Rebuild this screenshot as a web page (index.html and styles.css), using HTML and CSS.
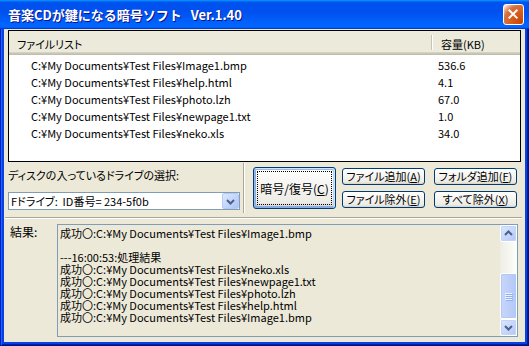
FILE: index.html
```html
<!DOCTYPE html>
<html lang="ja">
<head>
    <meta charset="UTF-8">
    <title>音楽CDが鍵になる暗号ソフト Ver.1.40</title>
    <link rel="stylesheet" href="styles.css">
</head>
<body>
    <div class="window">
        <div class="titlebar">
            <span class="title">音楽CDが鍵になる暗号ソフト&nbsp;&nbsp;&nbsp;Ver.1.40</span>
            <button class="close" aria-label="閉じる">
                <svg width="21" height="21" viewBox="0 0 21 21"><path d="M6 6 L14 14 M14 6 L6 14" stroke="#fff" stroke-width="2.2" stroke-linecap="square"/></svg>
            </button>
        </div>

        <div class="client">
            <div class="filelist">
                <div class="list-header">
                    <div class="col-path">ファイルリスト</div>
                    <div class="col-size">容量(KB)</div>
                </div>
                <ul class="rows">
                    <li><span class="col-path">C:¥My Documents¥Test Files¥Image1.bmp</span><span class="col-size">536.6</span></li>
                    <li><span class="col-path">C:¥My Documents¥Test Files¥help.html</span><span class="col-size">4.1</span></li>
                    <li><span class="col-path">C:¥My Documents¥Test Files¥photo.lzh</span><span class="col-size">67.0</span></li>
                    <li><span class="col-path">C:¥My Documents¥Test Files¥newpage1.txt</span><span class="col-size">1.0</span></li>
                    <li><span class="col-path">C:¥My Documents¥Test Files¥neko.xls</span><span class="col-size">34.0</span></li>
                </ul>
            </div>

            <div class="controls">
                <div class="drive">
                    <div class="drive-label">ディスクの入っているドライブの選択:</div>
                    <div class="combo">
                        <span class="combo-text">Fドライブ:&nbsp;&nbsp;ID番号= 234-5f0b</span>
                        <span class="combo-btn">
                            <svg width="15" height="15" viewBox="0 0 15 15"><path d="M4 6 L7.5 9.5 L11 6" fill="none" stroke="#4d6185" stroke-width="2"/></svg>
                        </span>
                    </div>
                </div>
                <div class="vsep"></div>
                <button class="btn btn-big"><span class="focus">暗号/復号(<u>C</u>)</span></button>
                <div class="btn-grid">
                    <button class="btn">ファイル追加(<u>A</u>)</button>
                    <button class="btn">フォルダ追加(<u>F</u>)</button>
                    <button class="btn">ファイル除外(<u>E</u>)</button>
                    <button class="btn">すべて除外(<u>X</u>)</button>
                </div>
            </div>

            <div class="hsep"></div>

            <div class="results">
                <div class="results-label">結果:</div>
                <div class="results-box">
                    <div class="log">成功〇:C:¥My Documents¥Test Files¥Image1.bmp

---16:00:53:処理結果
成功〇:C:¥My Documents¥Test Files¥neko.xls
成功〇:C:¥My Documents¥Test Files¥newpage1.txt
成功〇:C:¥My Documents¥Test Files¥photo.lzh
成功〇:C:¥My Documents¥Test Files¥help.html
成功〇:C:¥My Documents¥Test Files¥Image1.bmp</div>
                    <div class="scrollbar">
                        <div class="sb-btn">
                            <svg width="15" height="15" viewBox="0 0 15 15"><path d="M4 9 L7.5 5.5 L11 9" fill="none" stroke="#4d6185" stroke-width="2"/></svg>
                        </div>
                        <div class="sb-track">
                            <div class="sb-thumb"><span></span><span></span><span></span><span></span></div>
                        </div>
                        <div class="sb-btn">
                            <svg width="15" height="15" viewBox="0 0 15 15"><path d="M4 6 L7.5 9.5 L11 6" fill="none" stroke="#4d6185" stroke-width="2"/></svg>
                        </div>
                    </div>
                </div>
            </div>
        </div>
    </div>
</body>
</html>
```

FILE: styles.css
```css
* {
    box-sizing: border-box;
}
body {
    margin: 0;
    font-family: "Noto Sans CJK JP", "Liberation Sans", sans-serif;
    font-size: 11px;
    font-feature-settings: "palt";
    color: #000;
    background: #fff;
}
.window {
    width: 529px;
    height: 346px;
    display: flex;
    flex-direction: column;
    background: #0842e0;
    padding: 0 4px 4px;
    box-shadow: inset 1px 0 #0019cf, inset -1px 0 #00138c, inset 0 -1px #00138c, inset 2px 0 #166aee, inset -2px -2px #001ea0;
}
.titlebar {
    height: 29px;
    margin: 0 -4px;
    display: flex;
    align-items: center;
    justify-content: space-between;
    padding: 0 5px 0 8px;
    background: linear-gradient(180deg, #0997ff, #0053ee 8%, #0050ee 40%, #06f 88%, #06f 93%, #005bff 95%, #003dd7 96%, #003dd7);
}
.title {
    color: #fff;
    font-weight: bold;
    font-size: 13px;
    font-feature-settings: normal;
    line-height: 16px;
    text-shadow: 1px 1px #0f1089;
    white-space: pre;
}
.close {
    width: 21px;
    height: 21px;
    padding: 0;
    border: 1px solid #fff;
    border-radius: 3px;
    background: radial-gradient(circle at 90% 90%, #cc4600 0, #dc6527 55%, #cd7546 70%, #ffccb2 90%, #fff 100%);
    display: flex;
    align-items: center;
    justify-content: center;
}
.close svg {
    display: block;
}

.client {
    flex: 1;
    display: flex;
    flex-direction: column;
    background: #ece9d8;
}

/* file list */
.filelist {
    margin: 1px 4px 0;
    height: 132px;
    border: 1px solid #000;
    background: #fff;
}
.list-header {
    display: grid;
    grid-template-columns: 422px 1fr;
    height: 24px;
    background: #ebeadb;
    box-shadow: inset 0 -1px #c1bdae, inset 0 -2px #cbc7b8, inset 0 -3px #d6d2c2;
}
.list-header div {
    padding-top: 5px;
    line-height: 16px;
}
.list-header .col-path {
    padding-left: 8px;
}
.list-header .col-size {
    padding-left: 10px;
    position: relative;
}
.list-header .col-size::before {
    content: "";
    position: absolute;
    left: 0;
    top: 4px;
    height: 15px;
    width: 1px;
    background: #c7c5b2;
    box-shadow: 1px 0 #fff;
}
.rows {
    list-style: none;
    margin: 0;
    padding: 2px 0 0;
}
.rows li {
    display: grid;
    grid-template-columns: 422px 1fr;
    height: 17px;
    line-height: 17px;
}
.rows .col-path {
    padding-left: 22px;
}
.rows .col-size {
    padding-left: 7px;
}

/* drive + buttons */
.controls {
    height: 55px;
    display: flex;
    padding-left: 4px;
}
.drive {
    width: 232px;
    padding-top: 5px;
}
.drive-label {
    line-height: 16px;
}
.combo {
    margin-top: 9px;
    height: 18px;
    border: 1px solid #7f9db9;
    background: #fff;
    display: flex;
    align-items: center;
    justify-content: space-between;
    padding-left: 2px;
}
.combo-text {
    white-space: pre;
    line-height: 16px;
}
.combo-btn {
    width: 17px;
    height: 16px;
    border: 1px solid #bac9f0;
    border-radius: 2px;
    background: linear-gradient(135deg, #dde8fe, #bfd2fb 60%, #aec3f4);
    display: flex;
    align-items: center;
    justify-content: center;
}
.vsep {
    width: 2px;
    height: 50px;
    margin: 1px 0 0 3px;
    border-left: 1px solid #aca899;
    border-right: 1px solid #fff;
}
.btn {
    font: inherit;
    line-height: 15px;
    padding: 0;
    color: #000;
    border: 1px solid #003c74;
    border-radius: 3px;
    background: linear-gradient(180deg, #fff, #ecebe5 86%, #d8d0c4);
    white-space: nowrap;
}
.btn-big {
    width: 83px;
    height: 42px;
    margin: 5px 0 0 8px;
    padding: 3px;
    font-size: 12px;
    box-shadow: inset -1px 1px #cee7ff, inset 1px 2px #98b8ea, inset -2px 2px #bcd4f6, inset 1px -1px #89ade4, inset 2px -2px #89ade4;
}
.btn-big .focus {
    display: flex;
    align-items: center;
    justify-content: center;
    height: 100%;
    border: 1px dotted #000;
}
.btn-grid {
    display: grid;
    grid-template-columns: 83px 83px;
    grid-auto-rows: 17px;
    column-gap: 9px;
    row-gap: 6px;
    margin: 6px 0 0 6px;
}
.hsep {
    height: 2px;
    margin: 0 3px 0 1px;
    border-top: 1px solid #aca899;
    border-bottom: 1px solid #fff;
}

/* results */
.results {
    flex: 1;
    display: flex;
    padding: 5px 7px 5px 6px;
}
.results-label {
    width: 47px;
    line-height: 16px;
    font-size: 12px;
}
.results-box {
    flex: 1;
    display: flex;
    border: 1px solid #7f9db9;
    background: #ece9d8;
}
.log {
    flex: 1;
    padding: 2px 2px 0;
    line-height: 12px;
    white-space: pre;
    overflow: hidden;
}
.scrollbar {
    width: 17px;
    display: flex;
    flex-direction: column;
    background: linear-gradient(90deg, #eeede5, #fefefb);
}
.sb-btn {
    height: 17px;
    border: 1px solid #fff;
    border-radius: 2px;
    background: linear-gradient(135deg, #dde8fe, #c3d4fc 60%, #b0c6f6);
    box-shadow: inset 0 0 0 1px #c4d4f9;
    display: flex;
    align-items: center;
    justify-content: center;
}
.sb-track {
    flex: 1;
    display: flex;
    flex-direction: column;
    justify-content: flex-end;
}
.sb-thumb {
    height: 46px;
    border: 1px solid #fff;
    border-radius: 2px;
    background: linear-gradient(90deg, #c8d6fb, #bccdf9 60%, #b3c7f7);
    box-shadow: inset 0 0 0 1px #b4c8f6;
    display: flex;
    flex-direction: column;
    align-items: center;
    justify-content: center;
    gap: 1px;
}
.sb-thumb span {
    width: 7px;
    height: 1px;
    background: #eef4fe;
    box-shadow: 1px 1px #8cb0f8;
}
```
